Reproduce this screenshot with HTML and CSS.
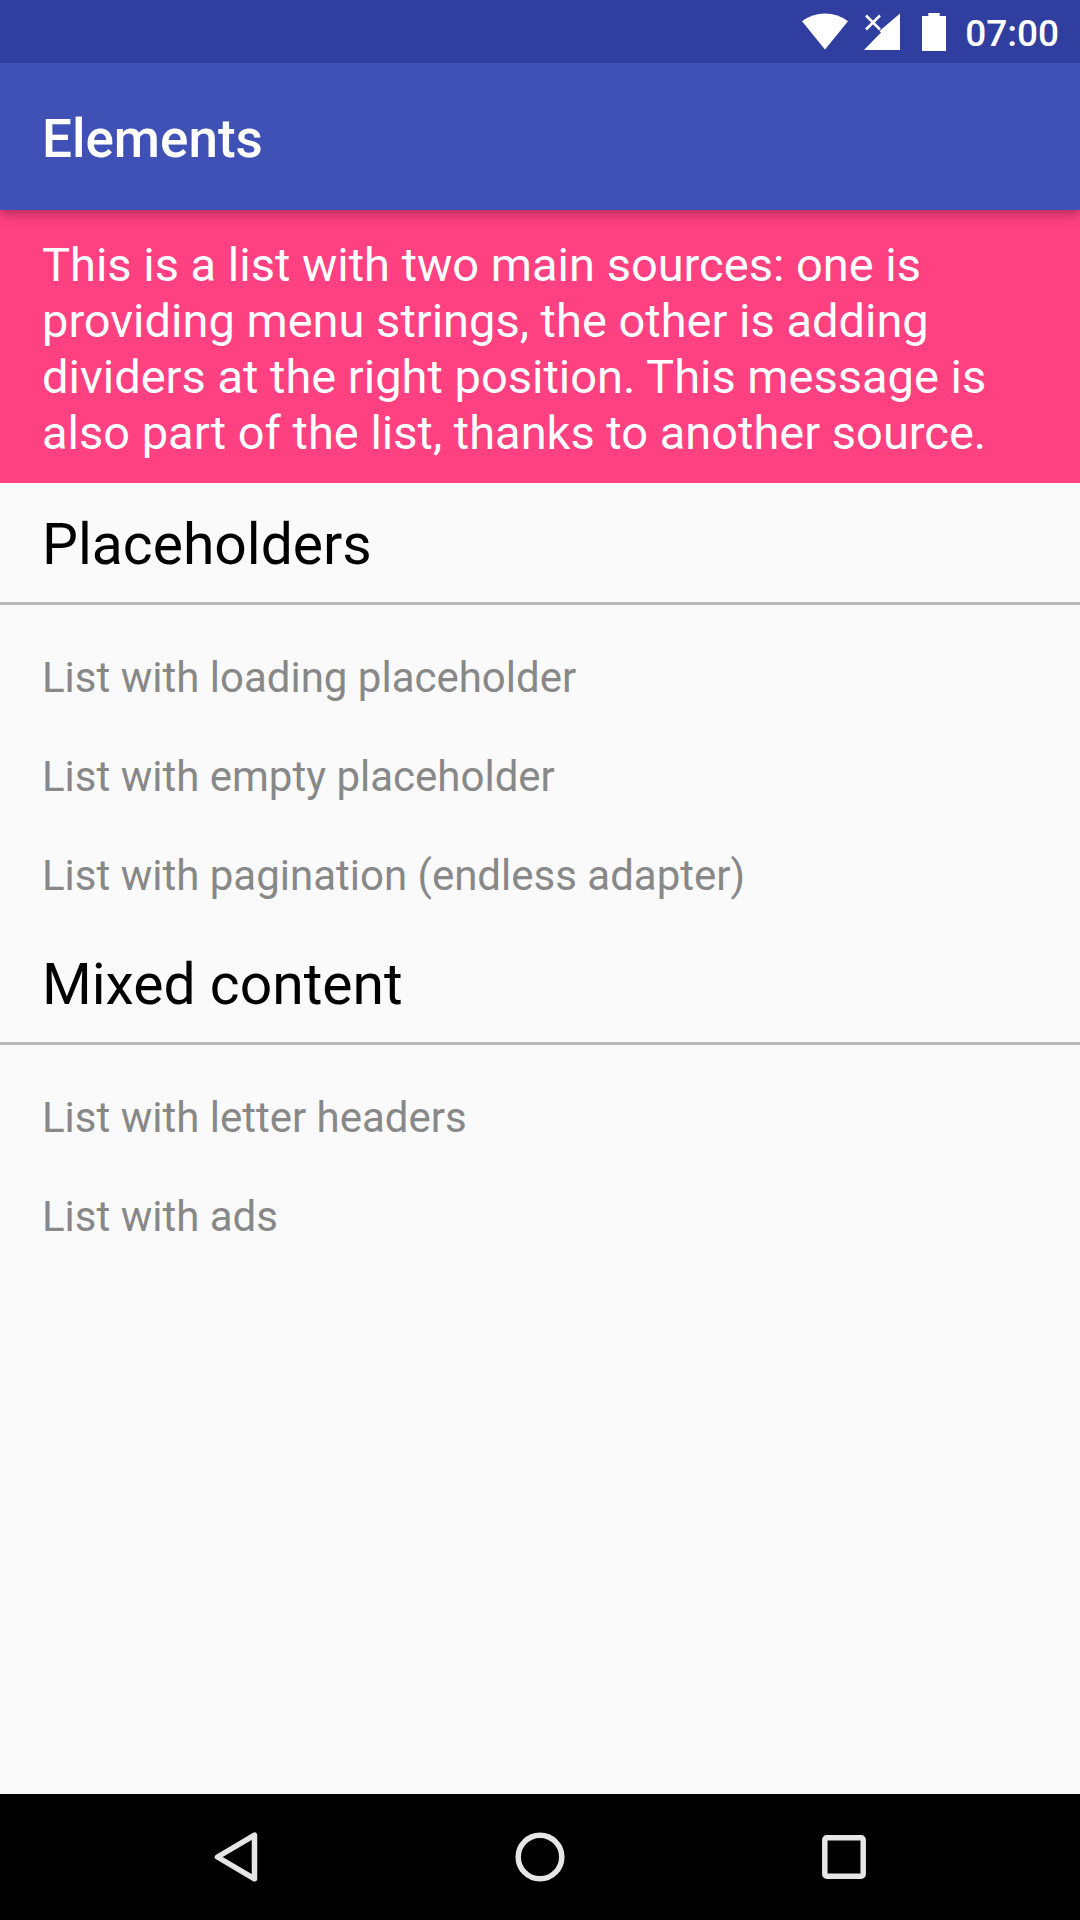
FILE: index.html
```html
<!DOCTYPE html>
<html lang="en">
<head>
<meta charset="utf-8">
<meta name="viewport" content="width=device-width, initial-scale=1">
<title>Elements</title>
<link rel="stylesheet" href="styles.css">
</head>
<body class="screen">
  <div class="status-bar">
    <svg class="wifi" width="48" height="37" viewBox="0 0 48 37" aria-hidden="true"><path d="M1 8.300Q11 .5 24 .5T47 8.300L24 36.500Z"/></svg>
    <svg class="signal" width="36" height="37" viewBox="0 0 36 37" aria-hidden="true"><path d="M36 .5V37H0L17 19.500 15.500 18Z"/><path class="cross" d="M2 2.500 16 16.500M16 2.500 2 16.500"/></svg>
    <svg class="battery" width="24" height="38" viewBox="0 0 24 38" aria-hidden="true"><path d="M6.300 0H17.700V3H24V38H0V3H6.300Z"/></svg>
    <time class="clock">07:00</time>
  </div>
  <header class="app-bar">
    <h1 class="title">Elements</h1>
  </header>
  <main class="content">
    <p class="message">This is a list with two main sources: one is providing menu strings, the other is adding dividers at the right position. This message is also part of the list, thanks to another source.</p>
    <section>
      <h2 class="divider">Placeholders</h2>
      <ul class="menu">
        <li><a class="item" href="#loading">List with loading placeholder</a></li>
        <li><a class="item" href="#empty">List with empty placeholder</a></li>
        <li><a class="item" href="#pagination">List with pagination (endless adapter)</a></li>
      </ul>
    </section>
    <section>
      <h2 class="divider">Mixed content</h2>
      <ul class="menu">
        <li><a class="item" href="#letters">List with letter headers</a></li>
        <li><a class="item" href="#ads">List with ads</a></li>
      </ul>
    </section>
  </main>
  <nav class="nav-bar">
    <button class="nav-button" type="button" aria-label="Back"><svg width="50" height="50" viewBox="0 0 50 50"><path d="M43.500 3.200V46.800L6.500 25Z"/></svg></button>
    <button class="nav-button" type="button" aria-label="Home"><svg width="50" height="50" viewBox="0 0 50 50"><circle cx="25" cy="25" r="21.800"/></svg></button>
    <button class="nav-button" type="button" aria-label="Recent apps"><svg width="50" height="50" viewBox="0 0 50 50"><rect x="5.800" y="5.800" width="38.400" height="38.400" rx="2"/></svg></button>
  </nav>
</body>
</html>
```
FILE: styles.css
```css
* {
  box-sizing: border-box;
}

.screen {
  display: flex;
  flex-direction: column;
  min-height: 100vh;
  margin: 0;
  background: #fafafa;
  font-family: Roboto, sans-serif;
}

.status-bar {
  position: relative;
  z-index: 1;
  display: flex;
  align-items: center;
  justify-content: flex-end;
  height: 63px;
  padding-right: 21px;
  background: #303f9f;
  color: #fff;
  fill: currentColor;
}

.signal {
  margin-left: 15px;
}

.cross {
  fill: none;
  stroke: currentColor;
  stroke-width: 2.5;
}

.battery {
  margin: 0 19px 0 22px;
}

.clock {
  padding-top: 3px;
  font-size: 37px;
  font-weight: 500;
  line-height: 43px;
}

.app-bar {
  position: relative;
  display: flex;
  align-items: center;
  height: 147px;
  padding: 4px 42px 0;
  background: #3f51b5;
  box-shadow: 0 3px 12px rgba(0, 0, 0, 0.35);
  color: #fff;
}

.title {
  margin: 0;
  font-size: 53px;
  font-weight: 500;
  line-height: 62px;
}

.content {
  flex: 1;
}

.message {
  margin: 0;
  padding: 27px 42px 22px;
  background: #ff4081;
  color: #fff;
  font-size: 47px;
  line-height: 56px;
}

.divider {
  margin: 0;
  padding: 28px 42px 23px;
  border-bottom: 3px solid #bbb;
  color: #000;
  font-size: 57px;
  font-weight: 400;
  line-height: 68px;
}

.menu {
  margin: 0;
  padding: 21px 0 0;
  list-style: none;
}

.item {
  display: block;
  padding: 27px 42px 23px;
  color: #888;
  font-size: 42px;
  line-height: 49px;
  text-decoration: none;
}

.nav-bar {
  display: grid;
  grid-template-columns: repeat(3, 1fr);
  height: 126px;
  padding: 0 84px;
  background: #000;
}

.nav-button {
  display: flex;
  align-items: center;
  justify-content: center;
  padding: 0;
  border: 0;
  background: none;
  color: #e6e6e6;
}

.nav-button svg {
  fill: none;
  stroke: currentColor;
  stroke-width: 5.5;
  stroke-linejoin: round;
}
```
